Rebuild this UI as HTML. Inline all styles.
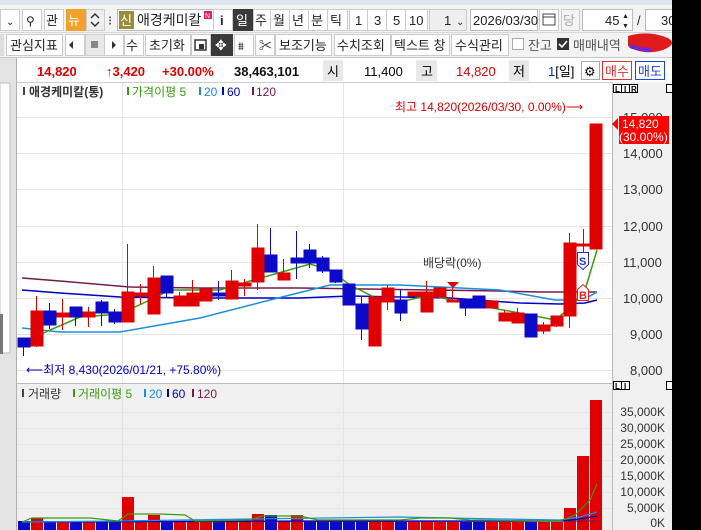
<!DOCTYPE html>
<html><head><meta charset="utf-8"><style>
html,body{margin:0;padding:0;background:#fff;width:701px;height:530px;overflow:hidden}
svg{display:block}
text{font-family:"Liberation Sans","Noto Sans CJK KR",sans-serif}
</style></head><body>
<svg width="701" height="530" viewBox="0 0 701 530" xmlns="http://www.w3.org/2000/svg">
<!-- backgrounds -->
<rect x="0" y="0" width="701" height="530" fill="#f0f0f0"/>
<rect x="0" y="0" width="701" height="5" fill="#dfe5ec"/>
<rect x="0" y="5" width="701" height="53" fill="#f3f3f3"/>
<line x1="0" y1="32.5" x2="701" y2="32.5" stroke="#d8d8d8"/>
<line x1="0" y1="57.5" x2="701" y2="57.5" stroke="#c8c8c8"/>
<!-- left strip -->
<rect x="0" y="58" width="16" height="472" fill="#e4e4e4"/>
<rect x="0" y="83" width="10" height="270" fill="#fff" stroke="#bbb"/>
<rect x="0" y="314" width="3" height="40" fill="#777"/>
<line x1="16.5" y1="58" x2="16.5" y2="530" stroke="#b0b0b0"/>

<!-- toolbar row1 -->
<g font-size="13" fill="#222">
<rect x="0.5" y="9.5" width="19" height="21" fill="#fff" stroke="#ccc"/><text x="6" y="25" font-size="10">⌄</text>
<rect x="22.5" y="9.5" width="19" height="21" fill="#fff" stroke="#ccc"/><text x="26" y="25" font-size="12">⚲</text>
<rect x="44.5" y="9.5" width="19" height="21" fill="#fff" stroke="#ccc"/><text x="46" y="25">관</text>
<rect x="66" y="9" width="20" height="22" fill="#f2a12c"/><text x="68" y="25" fill="#fff">뉴</text>
<rect x="86.5" y="9.5" width="18" height="21" fill="#eee" stroke="#ccc"/><path d="M91 18 l4-4 4 4 M91 22 l4 4 4-4" stroke="#333" fill="none" stroke-width="1.5"/>
<text x="108" y="25">⁝</text>
<rect x="117.5" y="9.5" width="100" height="21" fill="#fff" stroke="#bbb"/>
<rect x="119" y="11" width="15" height="18" fill="#9a8c38"/><text x="120" y="25" fill="#fff">신</text>
<text x="137" y="25" font-size="14">애경케미칼</text>
<rect x="204" y="11" width="8" height="8" fill="#e0205a"/><text x="205" y="18" font-size="7" fill="#fff">N</text>
<rect x="213.5" y="9.5" width="19" height="21" fill="#fff" stroke="#ccc"/><text x="220" y="25" font-weight="bold">i</text>
<rect x="233" y="9" width="20" height="22" fill="#3a3a3a"/><text x="236" y="25" fill="#fff">일</text>
<rect x="253.5" y="9.5" width="17" height="21" fill="#fff" stroke="#ccc"/><text x="255" y="25">주</text>
<rect x="270.5" y="9.5" width="19" height="21" fill="#fff" stroke="#ccc"/><text x="273" y="25">월</text>
<rect x="289.5" y="9.5" width="19" height="21" fill="#fff" stroke="#ccc"/><text x="292" y="25">년</text>
<rect x="308.5" y="9.5" width="19" height="21" fill="#fff" stroke="#ccc"/><text x="311" y="25">분</text>
<rect x="327.5" y="9.5" width="20" height="21" fill="#fff" stroke="#ccc"/><text x="330" y="25">틱</text>
<rect x="349.5" y="9.5" width="18" height="21" fill="#fff" stroke="#ccc"/><text x="355" y="25">1</text>
<rect x="367.5" y="9.5" width="19" height="21" fill="#fff" stroke="#ccc"/><text x="374" y="25">3</text>
<rect x="386.5" y="9.5" width="19" height="21" fill="#fff" stroke="#ccc"/><text x="393" y="25">5</text>
<rect x="405.5" y="9.5" width="22" height="21" fill="#fff" stroke="#ccc"/><text x="409" y="25">10</text>
<rect x="429.5" y="9.5" width="37" height="21" fill="#eee" stroke="#ccc"/><text x="444" y="25">1</text><text x="456" y="25" font-size="10">⌄</text>
<rect x="470.5" y="9.5" width="67" height="21" fill="#fff" stroke="#bbb"/><text x="473" y="25" font-size="13">2026/03/30</text>
<rect x="539.5" y="9.5" width="19" height="21" fill="#fff" stroke="#ccc"/><rect x="543" y="14" width="12" height="11" fill="none" stroke="#444"/><line x1="543" y1="17" x2="555" y2="17" stroke="#444"/>
<rect x="561.5" y="9.5" width="18" height="21" fill="#f4f4f4" stroke="#ccc"/><text x="563" y="25" fill="#aaa">당</text>
<rect x="582.5" y="9.5" width="50" height="21" fill="#fff" stroke="#bbb"/><text x="605" y="25">45</text><text x="622" y="18" font-size="7">▲</text><text x="622" y="28" font-size="7">▼</text>
<text x="637" y="25">/</text>
<rect x="645.5" y="9.5" width="30" height="21" fill="#fff" stroke="#bbb"/><text x="661" y="25">30</text>
</g>

<!-- toolbar row2 -->
<g font-size="13" fill="#222">
<rect x="0" y="34" width="4" height="22" fill="#ddd"/>
<rect x="6.5" y="34.5" width="56" height="21" fill="#fff" stroke="#ccc"/><text x="10" y="50">관심지표</text>
<rect x="65.5" y="34.5" width="19" height="21" fill="#fff" stroke="#ccc"/><path d="M73 41 l-4 4 4 4z" fill="#333"/>
<rect x="85.5" y="34.5" width="19" height="21" fill="#e8e8e8" stroke="#ccc"/><rect x="91" y="41" width="7" height="7" fill="#888"/>
<rect x="104.5" y="34.5" width="19" height="21" fill="#fff" stroke="#ccc"/><path d="M112 41 l4 4 -4 4z" fill="#333"/>
<rect x="124.5" y="34.5" width="19" height="21" fill="#fff" stroke="#ccc"/><text x="126" y="50">수</text>
<rect x="145.5" y="34.5" width="45" height="21" fill="#fff" stroke="#ccc"/><text x="149" y="50">초기화</text>
<rect x="191.5" y="34.5" width="19" height="21" fill="#fff" stroke="#ccc"/><rect x="195" y="40" width="11" height="10" fill="none" stroke="#333" stroke-width="1.5"/><rect x="199" y="44" width="5" height="5" fill="#333"/>
<rect x="211" y="34" width="22" height="22" fill="#3a3a3a"/><text x="215" y="50" fill="#fff" font-size="14">✥</text>
<rect x="234.5" y="34.5" width="19" height="21" fill="#fff" stroke="#ccc"/><text x="238" y="50" font-size="11">⩩</text>
<rect x="255.5" y="34.5" width="19" height="21" fill="#fff" stroke="#ccc"/><text x="259" y="50" font-weight="bold">✂</text>
<rect x="275.5" y="34.5" width="56" height="21" fill="#fff" stroke="#ccc"/><text x="279" y="50">보조기능</text>
<rect x="334.5" y="34.5" width="56" height="21" fill="#fff" stroke="#ccc"/><text x="337" y="50">수치조회</text>
<rect x="391.5" y="34.5" width="58" height="21" fill="#fff" stroke="#ccc"/><text x="394" y="50">텍스트 창</text>
<rect x="451.5" y="34.5" width="57" height="21" fill="#fff" stroke="#ccc"/><text x="455" y="50">수식관리</text>
<rect x="512.5" y="38.5" width="11" height="11" fill="#fff" stroke="#aaa"/><text x="528" y="50" fill="#555">잔고</text>
<rect x="557" y="38" width="12" height="12" fill="#333"/><path d="M559 44 l3 3 5-6" stroke="#fff" stroke-width="1.6" fill="none"/><text x="573" y="50" fill="#555">매매내역</text>
<path d="M628 36 q20 -6 40 2 q10 6 -5 12 q-20 6 -35 -4z" fill="#e01b1b"/>
<path d="M630 46 q10 4 22 4" stroke="#6b2ad0" stroke-width="4" fill="none"/>
<rect x="680" y="37" width="21" height="13" fill="#f2e600"/>
</g>

<!-- info row -->
<rect x="17" y="58" width="655" height="24" fill="#fff"/>
<line x1="17" y1="82.5" x2="612" y2="82.5" stroke="#ccc"/>
<g font-size="13" font-weight="bold">
<text x="37" y="76" fill="#d00">14,820</text>
<text x="106" y="76" fill="#d00">↑3,420</text>
<text x="162" y="76" fill="#d00">+30.00%</text>
<text x="234" y="76" fill="#111">38,463,101</text>
</g>
<g font-size="13">
<rect x="323" y="60" width="20" height="21" fill="#e8e8e8"/><text x="327" y="76">시</text>
<text x="364" y="76">11,400</text>
<rect x="416" y="60" width="21" height="21" fill="#e8e8e8"/><text x="421" y="76">고</text>
<text x="456" y="76" fill="#d00">14,820</text>
<rect x="509" y="60" width="20" height="21" fill="#e8e8e8"/><text x="513" y="76">저</text>
<text x="548" y="76"><tspan fill="#0030c0">1</tspan>[일]</text>
<rect x="581.5" y="61.5" width="18" height="18" fill="#fff" stroke="#aaa"/><text x="584" y="76" font-size="13">⚙</text>
<rect x="602.5" y="61.5" width="29" height="18" fill="#fff" stroke="#d33"/><text x="605" y="76" fill="#d33">매수</text>
<rect x="635.5" y="61.5" width="29" height="18" fill="#fff" stroke="#2244dd"/><text x="638" y="76" fill="#2244dd">매도</text>
</g>

<!-- chart panel -->
<rect x="17" y="83" width="595" height="300" fill="#fff"/>
<rect x="612" y="83" width="60" height="447" fill="#f0f0f0"/>
<line x1="612.5" y1="83" x2="612.5" y2="530" stroke="#bbb"/>
<g fill="#fff" stroke="#000" stroke-width="1" font-size="8">
<rect x="613.5" y="84.5" width="8" height="8"/><rect x="621.5" y="84.5" width="8" height="8"/><rect x="629.5" y="84.5" width="8" height="8"/>
<rect x="613.5" y="381.5" width="8" height="8"/><rect x="621.5" y="381.5" width="8" height="8"/>
<rect x="666.5" y="84.5" width="6" height="8"/><rect x="666.5" y="381.5" width="6" height="8"/>
</g>
<g font-size="8" font-weight="bold"><text x="615" y="92">L</text><text x="624" y="92">I</text><text x="631" y="92">R</text><text x="615" y="389">L</text><text x="624" y="389">I</text></g>
<!-- grid -->
<g stroke="#e4e4e4">
<line x1="17" y1="117.5" x2="612" y2="117.5"/><line x1="17" y1="153.5" x2="612" y2="153.5"/>
<line x1="17" y1="189.5" x2="612" y2="189.5"/><line x1="17" y1="226.5" x2="612" y2="226.5"/>
<line x1="17" y1="262.5" x2="612" y2="262.5"/><line x1="17" y1="298.5" x2="612" y2="298.5"/>
<line x1="17" y1="334.5" x2="612" y2="334.5"/><line x1="17" y1="370.5" x2="612" y2="370.5"/>
<line x1="122.5" y1="83" x2="122.5" y2="530"/><line x1="343.5" y1="83" x2="343.5" y2="530"/>
<line x1="17" y1="412.5" x2="612" y2="412.5"/><line x1="17" y1="428.5" x2="612" y2="428.5"/>
<line x1="17" y1="444.5" x2="612" y2="444.5"/><line x1="17" y1="460.5" x2="612" y2="460.5"/>
<line x1="17" y1="476.5" x2="612" y2="476.5"/><line x1="17" y1="492.5" x2="612" y2="492.5"/>
<line x1="17" y1="508.5" x2="612" y2="508.5"/>
</g>
<line x1="17" y1="383.5" x2="612" y2="383.5" stroke="#bbb"/>
<!-- price axis -->
<g font-size="13" fill="#333">
<text x="623" y="122">15,000</text><text x="623" y="158">14,000</text><text x="623" y="194">13,000</text>
<text x="623" y="231">12,000</text><text x="623" y="267">11,000</text><text x="623" y="303">10,000</text>
<text x="630" y="339">9,000</text><text x="630" y="375">8,000</text>
</g>
<rect x="619" y="116" width="50" height="28" fill="#f00"/>
<path d="M618 118 l-6 6 6 6z" fill="#f00"/>
<text x="622" y="128" font-size="12" fill="#fff">14,820</text>
<text x="619" y="141" font-size="12" fill="#fff">(30.00%)</text>
<!-- volume axis -->
<g font-size="12" fill="#333" text-anchor="end">
<text x="665" y="416">35,000K</text><text x="665" y="432">30,000K</text><text x="665" y="448">25,000K</text>
<text x="665" y="464">20,000K</text><text x="665" y="480">15,000K</text><text x="665" y="496">10,000K</text>
<text x="665" y="512">5,000K</text><text x="665" y="527">0K</text>
</g>

<!-- legends -->
<g font-size="12">
<rect x="23" y="87" width="2" height="8" fill="#444"/><text x="29" y="96" fill="#333" font-weight="bold">애경케미칼(통)</text>
<rect x="127" y="87" width="2" height="8" fill="#3a9a10"/><text x="132" y="96" fill="#3a9a10">가격이평 5</text>
<rect x="199" y="87" width="2" height="8" fill="#1a8ee0"/><text x="204" y="96" fill="#1a8ee0">20</text>
<rect x="222" y="87" width="2" height="8" fill="#0000c0"/><text x="227" y="96" fill="#0000c0">60</text>
<rect x="252" y="87" width="2" height="8" fill="#7a1a4a"/><text x="256" y="96" fill="#7a1a4a">120</text>
<rect x="22" y="389" width="2" height="8" fill="#444"/><text x="28" y="398" fill="#333">거래량</text>
<rect x="73" y="389" width="2" height="8" fill="#3a9a10"/><text x="78" y="398" fill="#3a9a10">거래이평 5</text>
<rect x="144" y="389" width="2" height="8" fill="#1a8ee0"/><text x="149" y="398" fill="#1a8ee0">20</text>
<rect x="167" y="389" width="2" height="8" fill="#0000c0"/><text x="172" y="398" fill="#0000c0">60</text>
<rect x="192" y="389" width="2" height="8" fill="#7a1a4a"/><text x="197" y="398" fill="#7a1a4a">120</text>
<text x="395" y="111" fill="#d00">최고 14,820(2026/03/30, 0.00%)⟶</text>
<text x="26" y="374" fill="#0000c0">⟵최저 8,430(2026/01/21, +75.80%)</text>
<text x="423" y="267" fill="#333">배당락(0%)</text>
</g>

<!-- MA lines -->
<g fill="none" stroke-width="1.5">
<polyline stroke="#7a1a4a" points="22,278 60,281 130,287 200,288 300,288 500,291 540,292 597,292"/>
<polyline stroke="#0000c8" points="22,290 60,293 120,297 200,298 300,298 350,296 450,298 520,303 560,304 585,303 597,300"/>
<polyline stroke="#1a8ee0" points="22,328 60,332 120,332 200,318 270,300 330,285 400,285 500,290 555,300 575,300 590,296 597,292"/>
<polyline stroke="#3a9a10" points="22,343 50,330 80,317 120,314 150,300 170,290 220,290 250,281 310,264 330,270 350,285 380,300 400,302 430,295 460,302 530,315 555,320 570,308 585,290 597,250"/>
</g>

<!-- candles -->
<g id="c">
<g fill="#0a0ac8" stroke="#0a0ac8">
<line x1="23.5" y1="338" x2="23.5" y2="356"/><rect x="18" y="338" width="12" height="9"/>
<line x1="49.5" y1="303" x2="49.5" y2="329"/><rect x="44" y="311" width="12" height="14"/>
<line x1="75.5" y1="307" x2="75.5" y2="326"/><rect x="70" y="307" width="12" height="10"/>
<line x1="101.5" y1="300" x2="101.5" y2="326"/><rect x="96" y="302" width="12" height="11"/>
<line x1="114.5" y1="309" x2="114.5" y2="324"/><rect x="109" y="312" width="12" height="10"/>
<line x1="166.5" y1="276" x2="166.5" y2="298"/><rect x="161" y="276" width="12" height="17"/>
<line x1="218.5" y1="281" x2="218.5" y2="300"/><rect x="213" y="293" width="12" height="3"/>
<line x1="270.5" y1="228" x2="270.5" y2="272"/><rect x="265" y="255" width="12" height="17"/>
<line x1="296.5" y1="231" x2="296.5" y2="279"/><rect x="291" y="258" width="12" height="5"/>
<line x1="309.5" y1="244" x2="309.5" y2="268"/><rect x="304" y="250" width="12" height="13"/>
<line x1="322.5" y1="256" x2="322.5" y2="273"/><rect x="317" y="258" width="12" height="13"/>
<line x1="335.5" y1="270" x2="335.5" y2="283"/><rect x="330" y="270" width="12" height="12"/>
<rect x="343" y="284" width="12" height="21"/>
<line x1="361.5" y1="296" x2="361.5" y2="340"/><rect x="356" y="304" width="12" height="25"/>
<line x1="400.5" y1="289" x2="400.5" y2="321"/><rect x="395" y="300" width="12" height="13"/>
<line x1="465.5" y1="299" x2="465.5" y2="316"/><rect x="460" y="299" width="12" height="9"/>
<rect x="473" y="296" width="12" height="12"/>
<rect x="525" y="314" width="12" height="23"/>
</g>
<g fill="#e00000" stroke="#e00000">
<line x1="36.5" y1="296" x2="36.5" y2="347"/><rect x="31" y="311" width="12" height="35"/>
<line x1="62.5" y1="299" x2="62.5" y2="330"/><rect x="57" y="313" width="12" height="4"/>
<line x1="88.5" y1="307" x2="88.5" y2="327"/><rect x="83" y="312" width="12" height="5"/>
<line x1="127.5" y1="244" x2="127.5" y2="322"/><rect x="122" y="292" width="12" height="30"/>
<line x1="140.5" y1="284" x2="140.5" y2="304"/><rect x="135" y="293" width="12" height="3"/>
<line x1="153.5" y1="266" x2="153.5" y2="314"/><rect x="148" y="278" width="12" height="36"/>
<line x1="179.5" y1="292" x2="179.5" y2="306"/><rect x="174" y="296" width="12" height="10"/>
<line x1="192.5" y1="280" x2="192.5" y2="306"/><rect x="187" y="293" width="12" height="13"/>
<rect x="200" y="289" width="12" height="12"/>
<line x1="231.5" y1="270" x2="231.5" y2="299"/><rect x="226" y="281" width="12" height="18"/>
<line x1="244.5" y1="279" x2="244.5" y2="296"/><rect x="239" y="283" width="12" height="3"/>
<line x1="257.5" y1="224" x2="257.5" y2="290"/><rect x="252" y="248" width="12" height="34"/>
<line x1="283.5" y1="259" x2="283.5" y2="280"/><rect x="278" y="273" width="12" height="7"/>
<rect x="369" y="297" width="12" height="49"/>
<line x1="387.5" y1="285" x2="387.5" y2="310"/><rect x="382" y="288" width="12" height="14"/>
<rect x="408" y="292" width="12" height="4"/>
<line x1="426.5" y1="281" x2="426.5" y2="312"/><rect x="421" y="292" width="12" height="20"/>
<rect x="434" y="288" width="12" height="9"/>
<line x1="452.5" y1="288" x2="452.5" y2="302"/><rect x="447" y="300" width="12" height="2"/>
<rect x="486" y="301" width="12" height="7"/>
<line x1="504.5" y1="310" x2="504.5" y2="321"/><rect x="499" y="313" width="12" height="8"/>
<line x1="517.5" y1="308" x2="517.5" y2="323"/><rect x="512" y="313" width="12" height="10"/>
<line x1="543.5" y1="322" x2="543.5" y2="334"/><rect x="538" y="325" width="12" height="6"/>
<line x1="556.5" y1="316" x2="556.5" y2="327"/><rect x="551" y="316" width="12" height="10"/>
<line x1="569.5" y1="233" x2="569.5" y2="328"/><rect x="564" y="243" width="12" height="73"/>
<line x1="583.5" y1="229" x2="583.5" y2="270"/><rect x="577" y="244" width="12" height="2"/>
<rect x="590" y="124" width="12" height="125"/>
</g>
</g>
<!-- dividend arrow -->
<path d="M447 282 h12 l-6 6z" fill="#e00000"/>
<!-- S/B markers -->
<path d="M577.5 252.5 h11 v12 l-5.5 5 -5.5 -5z" fill="#fff" stroke="#2233cc"/>
<text x="579" y="265" font-size="11" font-weight="bold" fill="#2233cc">S</text>
<path d="M577.5 300.5 h11 v-11 l-5.5 -5 -5.5 5z" fill="#fff" stroke="#d22"/>
<text x="579" y="299" font-size="11" font-weight="bold" fill="#d22">B</text>

<!-- volume -->
<g fill="#e00000">
<rect x="31" y="518" width="12" height="12"/><rect x="57" y="521" width="12" height="9"/><rect x="83" y="521" width="12" height="9"/>
<rect x="122" y="497" width="12" height="33"/><rect x="135" y="522" width="12" height="8"/><rect x="148" y="515" width="12" height="15"/>
<rect x="174" y="522" width="12" height="8"/><rect x="187" y="521" width="12" height="9"/><rect x="200" y="522" width="12" height="8"/>
<rect x="226" y="521" width="12" height="9"/><rect x="239" y="522" width="12" height="8"/><rect x="252" y="514" width="12" height="16"/>
<rect x="278" y="521" width="12" height="9"/><rect x="291" y="515" width="12" height="15"/><rect x="369" y="521" width="12" height="9"/>
<rect x="382" y="521" width="12" height="9"/><rect x="408" y="522" width="12" height="8"/><rect x="421" y="521" width="12" height="9"/>
<rect x="434" y="522" width="12" height="8"/><rect x="447" y="522" width="12" height="8"/><rect x="486" y="522" width="12" height="8"/>
<rect x="499" y="522" width="12" height="8"/><rect x="512" y="522" width="12" height="8"/><rect x="538" y="522" width="12" height="8"/>
<rect x="551" y="522" width="12" height="8"/><rect x="564" y="508" width="12" height="22"/><rect x="577" y="456" width="12" height="74"/>
<rect x="590" y="400" width="12" height="130"/>
</g>
<g fill="#0a0ac8">
<rect x="18" y="521" width="12" height="9"/><rect x="44" y="521" width="12" height="9"/><rect x="70" y="522" width="12" height="8"/>
<rect x="96" y="522" width="12" height="8"/><rect x="109" y="522" width="12" height="8"/><rect x="161" y="521" width="12" height="9"/>
<rect x="213" y="522" width="12" height="8"/><rect x="265" y="515" width="12" height="15"/><rect x="304" y="521" width="12" height="9"/>
<rect x="317" y="521" width="12" height="9"/><rect x="330" y="522" width="12" height="8"/><rect x="343" y="521" width="12" height="9"/>
<rect x="356" y="521" width="12" height="9"/><rect x="395" y="522" width="12" height="8"/><rect x="460" y="522" width="12" height="8"/>
<rect x="473" y="522" width="12" height="8"/><rect x="525" y="522" width="12" height="8"/>
</g>
<g fill="none" stroke-width="1.2">
<polyline stroke="#7a1a4a" points="22,522 597,521"/>
<polyline stroke="#0000c8" points="22,522 300,521 560,521 580,519 597,516"/>
<polyline stroke="#1a8ee0" points="22,522 120,521 250,519 400,517 500,519 560,520 580,517 597,512"/>
<polyline stroke="#3a9a10" points="22,522 32,518 90,518 118,521 128,514 160,514 185,515 195,521 250,520 262,516 300,516 318,520 400,520 420,518 450,518 470,520 560,521 575,515 590,500 597,484"/>
</g>

<!-- right black region -->
<rect x="672" y="0" width="29" height="530" fill="#000"/>
</svg>
</body></html>
